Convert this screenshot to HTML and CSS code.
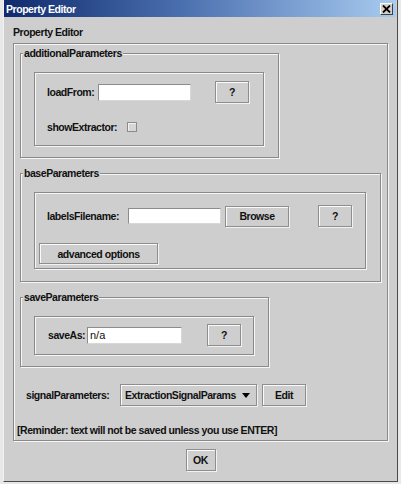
FILE: index.html
```html
<!DOCTYPE html>
<html>
<head>
<meta charset="utf-8">
<link rel="stylesheet" href="styles.css">
</head>
<body>
<div class="window">
  <div class="titlebar">
    <span class="title-text">Property Editor</span>
    <span class="close-btn"><svg width="9" height="8" viewBox="0 0 9 8"><path d="M1 0.5 L8 7.5 M8 0.5 L1 7.5" stroke="#000" stroke-width="1.8" fill="none"/></svg></span>
  </div>
  <div class="content">
    <div class="caption">Property Editor</div>
    <div class="outer etched">
      <div class="group group-a etched">
        <div class="gtitle">additionalParameters</div>
        <div class="inner inner-a etched">
          <div class="row row-h22">
            <span class="lbl w-load">loadFrom:</span>
            <span class="field w93"></span>
            <span class="btn btn-q gap24">?</span>
          </div>
          <div class="row row-h14 mt17">
            <span class="lbl w-show">showExtractor:</span>
            <span class="check"></span>
          </div>
        </div>
      </div>

      <div class="group group-b etched">
        <div class="gtitle">baseParameters</div>
        <div class="inner inner-b etched">
          <div class="row row-h22">
            <span class="lbl w-labels">labelsFilename:</span>
            <span class="field w93 h16"></span>
            <span class="btn btn-browse">Browse</span>
            <span class="btn btn-q gap29">?</span>
          </div>
          <div class="row mt16">
            <span class="btn btn-adv">advanced options</span>
          </div>
        </div>
      </div>

      <div class="group group-c etched">
        <div class="gtitle">saveParameters</div>
        <div class="inner inner-c etched">
          <div class="row row-h22">
            <span class="lbl w-save">saveAs:</span>
            <span class="field w95"><span class="field-text">n/a</span></span>
            <span class="btn btn-q gap25">?</span>
          </div>
        </div>
      </div>

      <div class="row signal-row">
        <span class="lbl w-signal">signalParameters:</span>
        <span class="combo"><span class="combo-text">ExtractionSignalParams</span><span class="arrow"></span></span>
        <span class="btn btn-edit">Edit</span>
      </div>

      <div class="reminder">[Reminder: text will not be saved unless you use ENTER]</div>
    </div>
    <div class="ok-wrap"><span class="btn btn-ok">OK</span></div>
  </div>
</div>
</body>
</html>
```

FILE: styles.css
```css
* { box-sizing: border-box; }

html, body {
  margin: 0;
  padding: 0;
}

body {
  width: 401px;
  height: 484px;
  overflow: hidden;
  background: #e8e8e8;
  font-family: "Liberation Sans", Arial, sans-serif;
  font-size: 10.5px;
  letter-spacing: -0.45px;
  font-weight: bold;
  color: #111;
}

.window {
  margin-left: 3px;
  width: 395px;
  height: 482px;
  background: #cecece;
  border-left: 1px solid #f2f2f2;
  border-right: 1px solid #4a4a4a;
  border-bottom: 1px solid #4a4a4a;
  display: flex;
  flex-direction: column;
}

.titlebar {
  height: 17px;
  margin-right: 1px;
  background: linear-gradient(to right, #0f2a6e, #4a6fae 45%, #a8cbf0);
  display: flex;
  align-items: center;
  justify-content: space-between;
  padding: 0 3px 0 2px;
}

.title-text {
  color: #fff;
  line-height: 14px;
}

.close-btn {
  width: 13px;
  height: 12px;
  background: #d4d0c8;
  border: 1px solid;
  border-color: #fff #404040 #404040 #fff;
  display: flex;
  align-items: center;
  justify-content: center;
}

.content {
  padding-left: 9px;
}

.caption {
  margin-top: 8px;
  line-height: 14px;
  height: 14px;
}

.etched {
  border: 1px solid #8a8a8a;
  box-shadow: inset 1px 1px 0 #f6f6f6, 1px 1px 0 #f6f6f6;
}

.outer {
  margin-top: 4px;
  width: 375px;
  height: 398px;
  padding: 9px 0 0 6px;
}

.gtitle {
  margin: -8px 0 0 2px;
  padding: 0 1px;
  height: 14px;
  line-height: 14px;
  width: fit-content;
  background: #cecece;
}

.group-a { width: 259px; height: 105px; }
.group-b { width: 361px; height: 109px; margin-top: 15px; }
.group-c { width: 249px; height: 70px; margin-top: 15px; }

.inner {
  margin: 12px 0 0 13px;
}

.inner-a { width: 230px; height: 74px; padding: 8px 0 0 12px; }
.inner-b { width: 332px; height: 77px; padding: 12px 0 0 12px; }
.inner-c { width: 220px; height: 39px; padding: 7px 0 0 13px; }

.row {
  display: flex;
  align-items: center;
}

.row-h22 { height: 22px; }
.row-h14 { height: 14px; }
.mt17 { margin-top: 17px; }
.mt16 { margin-top: 16px; }

.lbl {
  flex: none;
  line-height: 14px;
  white-space: nowrap;
}

.w-load { width: 51px; }
.w-show { width: 80px; }
.w-labels { width: 81px; }
.w-save { width: 39px; }
.w-signal { width: 94px; }

.field {
  flex: none;
  height: 17px;
  background: #fff;
  border: 1px solid;
  border-color: #8c8c8c #d8d8d8 #d8d8d8 #8c8c8c;
  display: flex;
  align-items: center;
  padding-left: 2px;
}

.w93 { width: 93px; }
.w95 { width: 95px; }
.h16 { height: 16px; }

.field-text {
  font-weight: normal;
  font-size: 11px;
  letter-spacing: 0;
  color: #111;
}

.check {
  flex: none;
  width: 10px;
  height: 10px;
  border: 1px solid #8a8a8a;
  background: #d6d6d6;
  box-shadow: inset 1px 1px 0 #f2f2f2;
}

.btn {
  flex: none;
  display: flex;
  align-items: center;
  justify-content: center;
  height: 22px;
  border: 1px solid #8e8e8e;
  box-shadow: inset 1px 1px 0 #fafafa, 1px 1px 0 #f2f2f2;
  background: #cecece;
  line-height: 14px;
}

.btn-q { width: 34px; }
.gap24 { margin-left: 24px; }
.gap29 { margin-left: 29px; }
.gap25 { margin-left: 25px; }

.btn-browse { width: 64px; height: 21px; margin-left: 4px; }
.btn-adv { width: 119px; height: 21px; margin-left: -8px; }

.signal-row {
  height: 22px;
  margin-top: 17px;
  padding-left: 6px;
}

.combo {
  flex: none;
  width: 137px;
  height: 22px;
  border: 1px solid #8e8e8e;
  box-shadow: inset 1px 1px 0 #fafafa, 1px 1px 0 #f2f2f2;
  display: flex;
  align-items: center;
  justify-content: space-between;
  padding: 0 6px 0 4px;
}

.arrow {
  width: 0;
  height: 0;
  border-left: 4px solid transparent;
  border-right: 4px solid transparent;
  border-top: 5px solid #000;
}

.btn-edit { width: 44px; margin-left: 5px; }

.reminder {
  margin: 17px 0 0 -3px;
  line-height: 14px;
  height: 14px;
  white-space: nowrap;
}

.ok-wrap {
  margin-top: 8px;
  display: flex;
  justify-content: center;
  padding-right: 9px;
}

.btn-ok { width: 30px; }
```
